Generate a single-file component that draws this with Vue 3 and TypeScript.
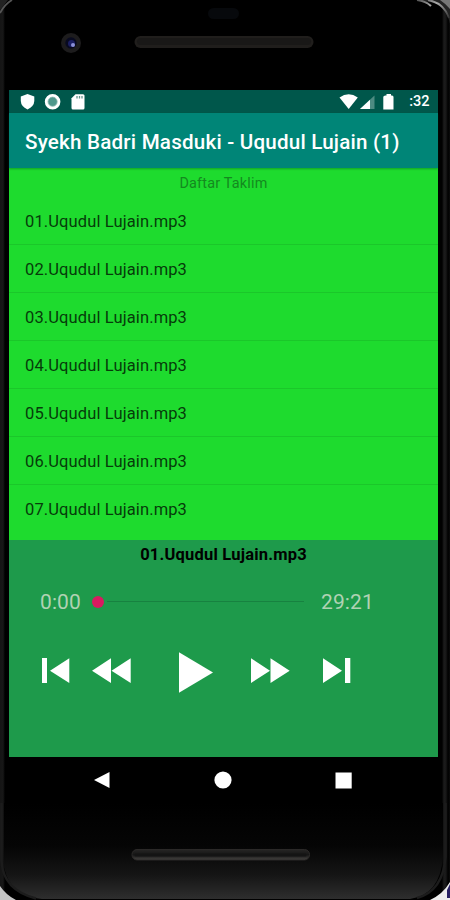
<script setup lang="ts">
import { ref } from 'vue'

interface Track {
  id: number
  title: string
}

const tracks: Track[] = Array.from({ length: 7 }, (_, i) => ({
  id: i + 1,
  title: `0${i + 1}.Uqudul Lujain.mp3`,
}))
const current = ref<Track>(tracks[0])
</script>

<template>
  <div class="phone">
    <svg class="bezel" width="450" height="90" viewBox="0 0 450 90">
      <defs>
        <linearGradient id="rim" x1="0" y1="0" x2="1" y2="1">
          <stop offset="0" stop-color="#555" />
          <stop offset="0.4" stop-color="#aaa" />
          <stop offset="1" stop-color="#333" />
        </linearGradient>
      </defs>
      <path d="M0 0H8L0 10Z" fill="#222" />
      <path d="M12 0Q5 4 0 13" fill="none" stroke="#555" stroke-width="1.8" />
      <path d="M418 0H450V24Q446 5 430 2Z" fill="#242424" />
      <path d="M417 0Q426 1 431 6M428 0Q444 3 449 18" fill="none" stroke="url(#rim)" stroke-width="2" />
      <path d="M440 0H450V9Q446 4 440 0Z" fill="#777" />
      <rect x="208" y="8" width="31" height="11" rx="5.5" fill="#07090c" />
      <circle cx="71" cy="43" r="10" fill="#1d1c1d" />
      <circle cx="71" cy="43" r="5.7" fill="#080a20" />
      <circle cx="71.5" cy="43.5" r="3.5" fill="#1b1e62" />
      <circle cx="73" cy="45" r="2" fill="#8c91d8" />
      <rect x="134.5" y="36" width="179" height="12" rx="6" fill="#201e1c" />
      <rect x="137" y="38" width="174" height="7" rx="3.5" fill="#191817" />
    </svg>

    <main class="screen">
      <div class="status">
        <svg width="55" height="23" viewBox="0 0 55 23">
          <path d="M11.5 4L18.3 6.5V11Q18 16.5 11.5 19.4Q5 16.5 4.8 11V6.5Z" fill="#fff" />
          <circle cx="36.6" cy="11.7" r="6.2" fill="#4f988c" stroke="#fff" stroke-width="3.2" />
          <circle cx="36.6" cy="11.7" r="4.6" fill="none" stroke="#90bcb4" stroke-width="0.8" />
        </svg>
        <svg width="14" height="23" viewBox="0 0 14 23">
          <path d="M4.5 4.2H12Q13.5 4.2 13.5 5.7V18Q13.5 19.5 12 19.5H2Q.5 19.5 .5 18V8.3Z" fill="#fff" />
          <path d="M6 5.9V8.6M8.5 5.9V8.6M11 5.9V8.6" stroke="#66958d" stroke-width="1.3" />
        </svg>
        <span class="grow"></span>
        <svg width="60" height="23" viewBox="0 0 60 23">
          <path d="M.5 7.5Q9.7 .8 18.8 7.5L9.7 19Z" fill="#fff" />
          <path d="M35.5 5.5V19H21Z" fill="#4d8b82" />
          <path d="M31 9.7V19H21Z" fill="#fff" />
          <path d="M46.5 5.5H47.5V4H52V5.5H53Q54.5 5.5 54.5 7V19.5H44.3V7Q44.3 5.5 46.5 5.5Z" fill="#fff" />
        </svg>
        <span class="clock">:32</span>
      </div>

      <header class="appbar"><h1>Syekh Badri Masduki - Uqudul Lujain (1)</h1></header>

      <section class="playlist">
        <div class="caption">Daftar Taklim</div>
        <ul>
          <li v-for="track in tracks" :key="track.id" @click="current = track">
            <span>{{ track.title }}</span>
          </li>
        </ul>
      </section>

      <section class="player">
        <div class="now">{{ current.title }}</div>
        <div class="progress">
          <span class="time">0:00</span>
          <div class="seek"><i class="thumb"></i><i class="track"></i></div>
          <span class="time total">29:21</span>
        </div>
        <div class="controls">
          <svg width="27" height="42" viewBox="0 0 27 42">
            <path d="M0 8H5V33H0ZM27.3 8.3V33L8 20.7Z" />
          </svg>
          <svg class="rewind" width="39" height="42" viewBox="0 0 39 42">
            <path d="M19 8.3V33L0 20.7ZM38.7 8.3V33L19.5 20.7Z" />
          </svg>
          <svg class="play" width="34" height="42" viewBox="0 0 34 42">
            <path d="M0 2.2L34 22.4L0 42.7Z" />
          </svg>
          <svg class="forward" width="39" height="42" viewBox="0 0 39 42">
            <path d="M0 8.3V33L19 20.7ZM19.5 8.3V33L38.7 20.7Z" />
          </svg>
          <svg class="next" width="28" height="42" viewBox="0 0 28 42">
            <path d="M0 8.3V33L19 20.7ZM22 8H27.3V33H22Z" />
          </svg>
        </div>
      </section>
    </main>

    <nav class="navbar">
      <svg width="16" height="16" viewBox="0 0 16 16"><path d="M15.5 0V16L0 8Z" /></svg>
      <svg width="18" height="18" viewBox="0 0 18 18"><circle cx="9" cy="9" r="8.6" /></svg>
      <svg width="17" height="17" viewBox="0 0 17 17"><path d="M.5 .5H16.7V16.5H.5Z" /></svg>
    </nav>

    <svg class="bezel" width="450" height="97" viewBox="0 0 450 97">
      <defs>
        <linearGradient id="chin" x1="0" y1="0" x2="0" y2="1">
          <stop offset="0" stop-color="#000" />
          <stop offset="0.45" stop-color="#050505" />
          <stop offset="0.75" stop-color="#151515" />
          <stop offset="1" stop-color="#2e2e2e" />
        </linearGradient>
        <linearGradient id="grille" x1="0" y1="0" x2="0" y2="1">
          <stop offset="0" stop-color="#262524" />
          <stop offset="0.5" stop-color="#161616" />
          <stop offset="1" stop-color="#454341" />
        </linearGradient>
      </defs>
      <path d="M4 0H443V54Q440 92 410 96H42Q10 94 4 64Z" fill="url(#chin)" />
      <path d="M1.5 0V58Q3 87 36 95.5M445.5 0V54Q443 88 417 95" fill="none" stroke="#1c1c1c" stroke-width="2.5" />
      <path d="M0 83Q6 92 16 97H0Z" fill="#c4c4c4" />
      <path d="M450 79Q443 91 430 97H450Z" fill="#eee" />
      <path d="M447 87L450 81V95H447Z" fill="#292164" />
      <rect x="132" y="46.5" width="177.5" height="10.5" rx="5" fill="url(#grille)" stroke="#2b2928" stroke-width="1" />
      <path d="M136 52H305" stroke="#141414" stroke-width="3" stroke-linecap="round" />
    </svg>
  </div>
</template>

<style>
body { margin: 0; background: #000; overflow: hidden; }
</style>

<style scoped>
.phone {
  display: flex;
  flex-direction: column;
  width: 450px;
  height: 900px;
  font-family: Roboto, "Liberation Sans", sans-serif;
  background: linear-gradient(90deg, #151515 0, #171717 3px, #000 5px, #000 442px, #1c1c1c 444px, #171717 446px, #000 448px, #0b0b0b 450px);
}
svg { display: block; flex: none; }
.screen { width: 429px; height: 667px; margin-left: 9px; display: flex; flex-direction: column; }
.status {
  display: flex;
  align-items: center;
  height: 23px;
  padding: 0 8.5px 0 6.5px;
  box-sizing: border-box;
  background: #00574b;
}
.grow { flex: 1; }
.clock { width: 31px; text-align: right; color: #fff; font-size: 14.5px; font-weight: 500; line-height: 24px; padding-top: 1px; }
.appbar {
  height: 55px;
  display: flex;
  align-items: center;
  padding-left: 16px;
  background: #008577;
  box-shadow: 0 1px 2px rgba(0, 70, 30, 0.4);
  position: relative;
}
h1 { margin: 0; padding-top: 2px; color: #fff; font-size: 20.6px; font-weight: 500; white-space: nowrap; letter-spacing: 0.21px; }
.playlist { height: 371.5px; background: #1edb2e; overflow: hidden; }
.caption { height: 29px; line-height: 31px; text-align: center; font-size: 14.4px; letter-spacing: 0.2px; color: #14891f; }
ul { margin: 0; padding: 0; list-style: none; }
li {
  display: flex;
  align-items: center;
  box-sizing: border-box;
  height: 48px;
  padding: 2px 0 0 16px;
  border-bottom: 1px solid #1bc72a;
  color: #063c0a;
  font-size: 16.5px;
  letter-spacing: 0.12px;
}
li:last-child { border-bottom-color: transparent; }
.player { height: 217.5px; background: #1e9a4b; }
.now { height: 30px; line-height: 30px; text-align: center; font-size: 16.5px; font-weight: 700; letter-spacing: 0.2px; color: #000; }
.progress { display: flex; align-items: center; height: 64px; padding-left: 31px; }
.time { width: 52px; font-size: 21px; letter-spacing: 0.1px; color: #b0d2b3; }
.seek { display: flex; align-items: center; width: 212px; }
.thumb { width: 12px; height: 12px; border-radius: 50%; background: #d81b60; }
.track { flex: 1; height: 1.5px; margin-left: 3px; background: #178240; }
.total { margin-left: 17px; }
.controls { display: flex; height: 42px; margin-top: 16.5px; padding-left: 33px; fill: #fff; }
.controls svg { overflow: visible; }
.rewind { margin-left: 23px; }
.play { margin-left: 47.5px; }
.forward { margin-left: 38px; }
.next { margin-left: 33px; }
.navbar { display: flex; align-items: center; justify-content: space-between; height: 46px; padding: 0 98px 0 94px; fill: #fff; }
</style>
